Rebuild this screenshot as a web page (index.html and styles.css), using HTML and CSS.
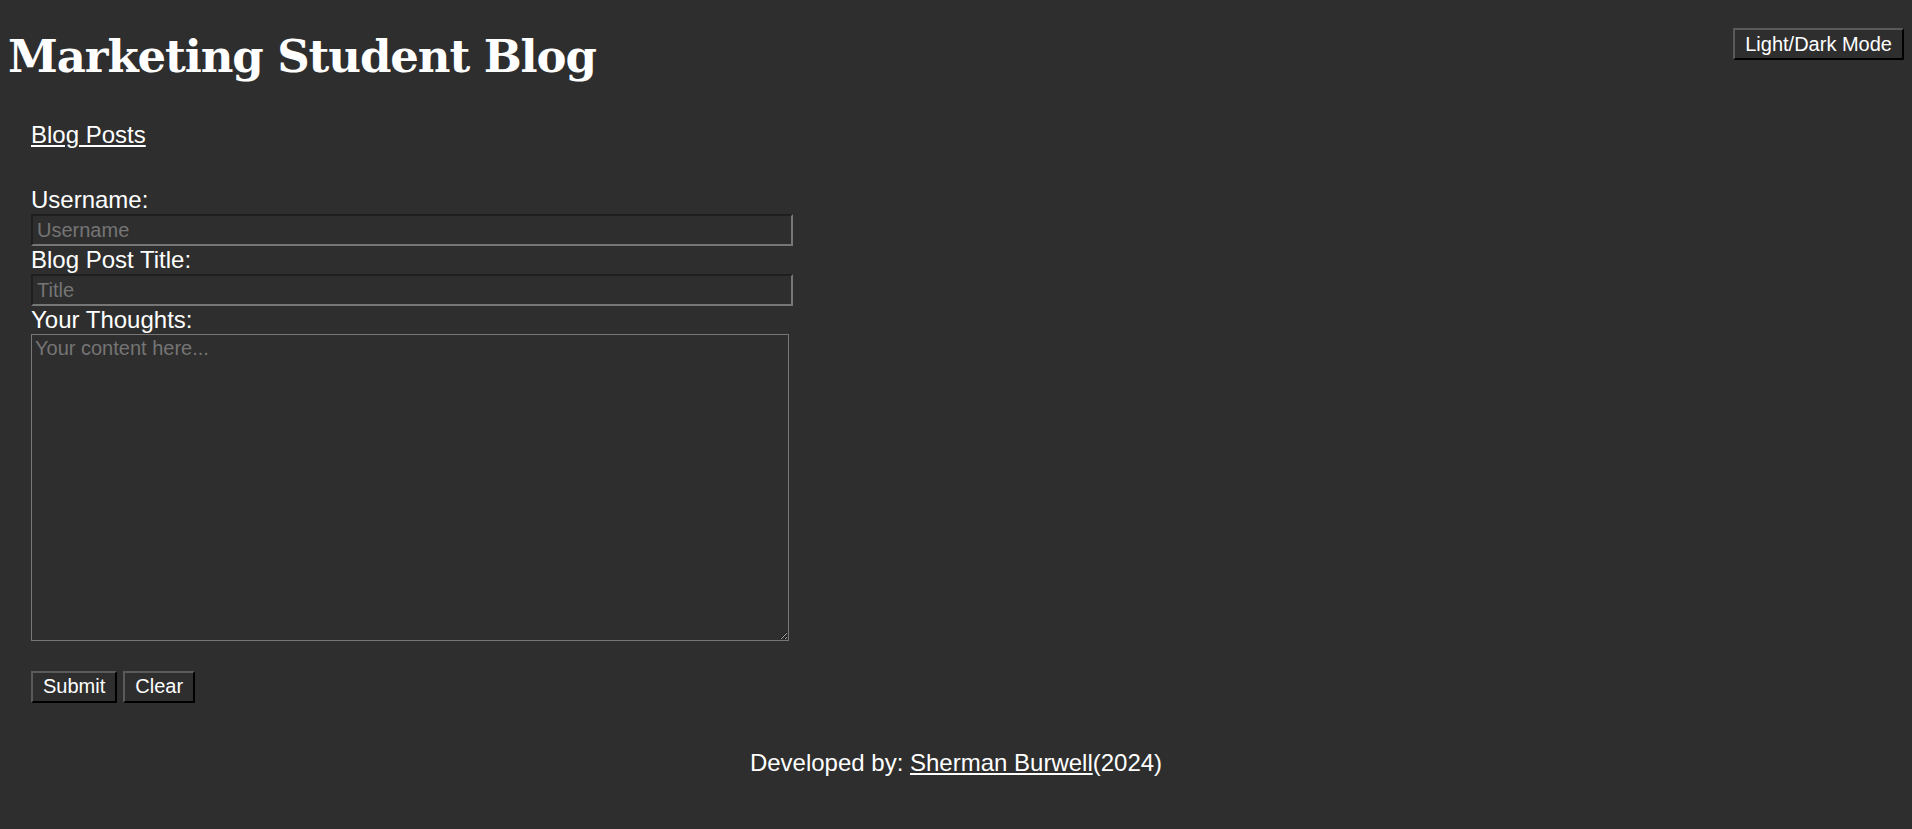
FILE: index.html
```html
<!DOCTYPE html>
<html lang="en">
<head>
<meta charset="utf-8">
<title>Marketing Student Blog</title>
<link rel="stylesheet" href="styles.css">
</head>
<body>
<header class="top">
  <h1 class="site-title">Marketing Student Blog</h1>
  <button class="btn mode-btn" type="button">Light/Dark Mode</button>
</header>
<main class="content">
  <nav class="nav"><a href="#" class="link">Blog Posts</a></nav>
  <form class="post-form">
    <label class="field-label" for="username">Username:</label>
    <input class="text-input" id="username" type="text" placeholder="Username">
    <label class="field-label" for="title">Blog Post Title:</label>
    <input class="text-input" id="title" type="text" placeholder="Title">
    <label class="field-label" for="content">Your Thoughts:</label>
    <textarea class="text-area" id="content" placeholder="Your content here..."></textarea>
    <div class="actions">
      <button class="btn" type="submit">Submit</button>
      <button class="btn" type="button">Clear</button>
    </div>
  </form>
</main>
<footer class="footer">Developed by: <a href="#" class="link">Sherman Burwell</a>(2024)</footer>
</body>
</html>
```

FILE: styles.css
```css
html, body {
  background: #2e2e2e;
}
body {
  margin: 8px;
  color: #ffffff;
  font-family: "Liberation Sans", Arial, sans-serif;
  font-size: 24px;
}
.top {
  display: flex;
  justify-content: space-between;
  align-items: flex-start;
}
.site-title {
  margin: 19px 0 0 0;
  font-family: "DejaVu Serif", Georgia, serif;
  font-weight: bold;
  font-size: 45px;
  letter-spacing: -1.1px;
  line-height: 60px;
}
.btn {
  font-family: "Liberation Sans", Arial, sans-serif;
  font-size: 20px;
  color: #ffffff;
  background: #2e2e2e;
  border-style: solid;
  border-width: 2px;
  border-color: #5a5a5a #000000 #000000 #5a5a5a;
  padding: 0 10px;
  height: 32px;
  line-height: 23px;
  cursor: pointer;
}
.mode-btn {
  margin-top: 20px;
}
.content {
  padding-left: 23px;
}
.nav {
  margin-top: 34px;
  line-height: 27.6px;
}
.link {
  color: #ffffff;
  text-decoration: underline;
}
.post-form {
  margin-top: 37px;
  display: flex;
  flex-direction: column;
  align-items: flex-start;
}
.field-label {
  display: block;
  line-height: 28px;
}
.text-input {
  box-sizing: border-box;
  width: 762px;
  height: 32px;
  margin: 0;
  padding: 2px 4px 0 4px;
  font-family: "Liberation Sans", Arial, sans-serif;
  font-size: 20px;
  color: #ffffff;
  background: #2e2e2e;
  border-style: solid;
  border-width: 2px;
  border-color: #1f1f1f #767676 #767676 #1f1f1f;
}
.text-input::placeholder,
.text-area::placeholder {
  color: #757575;
}
.text-area {
  box-sizing: border-box;
  width: 758px;
  height: 307px;
  margin: 0;
  padding: 2px 3px;
  font-family: "Liberation Sans", Arial, sans-serif;
  font-size: 20px;
  color: #ffffff;
  background: #2e2e2e;
  border: 1px solid #767676;
  resize: both;
}
.actions {
  margin-top: 30px;
  display: flex;
  gap: 6px;
}
.footer {
  margin-top: 46px;
  text-align: center;
  line-height: 27.6px;
}
```
